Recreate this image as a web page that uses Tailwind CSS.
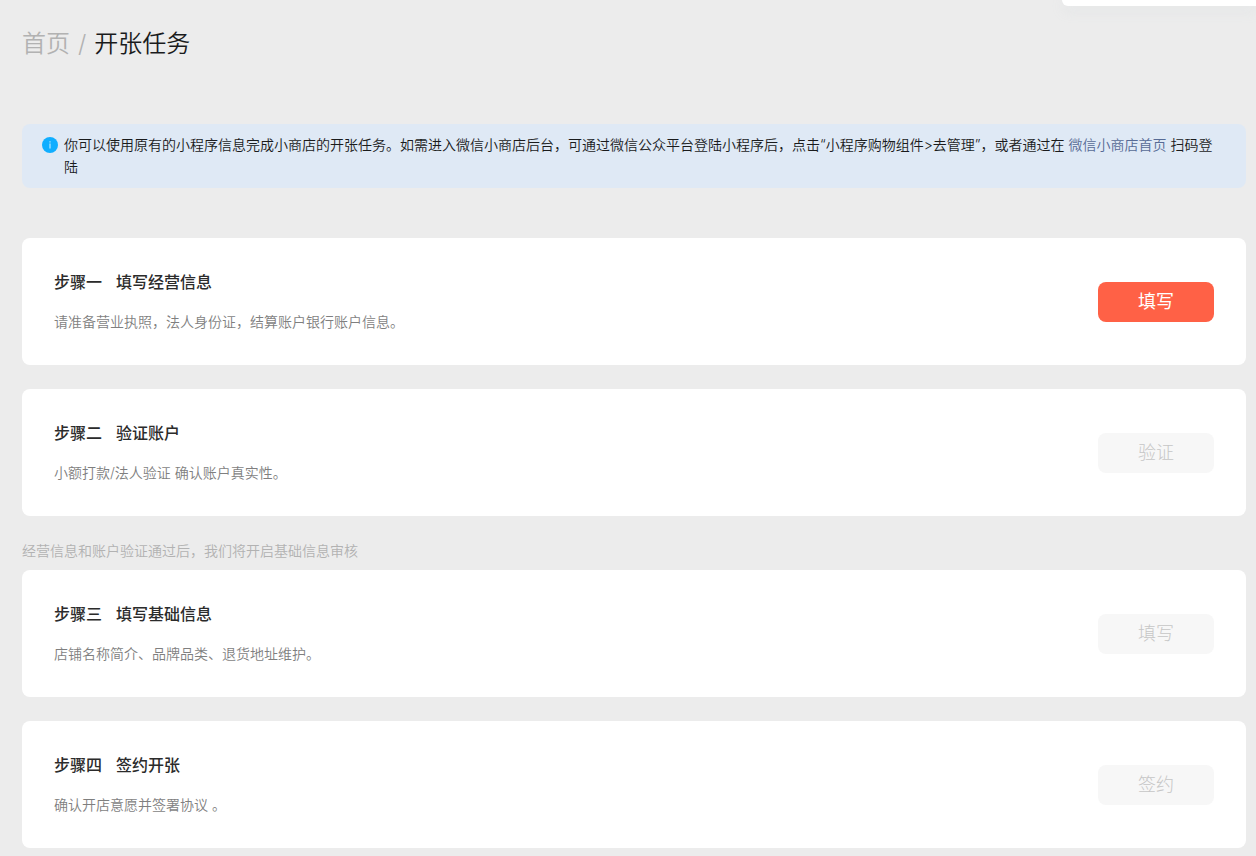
<!DOCTYPE html>
<html lang="zh-CN">
<head>
<meta charset="utf-8">
<meta name="viewport" content="width=device-width, initial-scale=1">
<title>开张任务</title>
<script src="https://cdn.jsdelivr.net/npm/@tailwindcss/browser@4"></script>
</head>
<body class="relative min-h-screen overflow-x-hidden bg-[#ececec] font-['Inter','Noto_Sans_CJK_SC',sans-serif] text-sm font-[350] text-[#1a1b1c]">
<div class="absolute top-0 right-0 h-[6px] w-[194px] rounded-bl-lg bg-white shadow-[0_4px_14px_rgba(180,195,205,0.2)]"></div>
<main class="pt-7 pr-[10px] pb-2 pl-[22px]">
  <nav aria-label="面包屑" class="flex gap-2 text-2xl leading-8">
    <a href="#" class="text-[#b2b2b2]">首页</a>
    <span class="text-[#b2b2b2]">/</span>
    <h1 class="font-[350]">开张任务</h1>
  </nav>

  <section class="mt-16 flex gap-[6px] rounded-lg bg-[#dfe9f5] py-[10px] pr-7 pl-5 leading-[22px]">
    <svg class="mt-[3px] size-4 shrink-0" viewBox="0 0 16 16" aria-hidden="true">
      <circle cx="8" cy="8" r="8" fill="#10aeff"/>
      <path d="M7.5 4.2h1v1.2h-1zM7.5 6.5h1v5.1h-1z" fill="#d8f1ff"/>
    </svg>
    <p>你可以使用原有的小程序信息完成小商店的开张任务。如需进入微信小商店后台，可通过微信公众平台登陆小程序后，点击“小程序购物组件&gt;去管理”，或者通过在 <a href="#" class="text-[#576b95]">微信小商店首页</a> 扫码登陆</p>
  </section>

  <section class="mt-[50px] flex items-center justify-between rounded-lg bg-white p-8">
    <div>
      <h2 class="flex gap-[14px] text-base leading-6 font-medium text-[#2b2b2b]"><span>步骤一</span><span>填写经营信息</span></h2>
      <p class="mt-4 leading-[23px] text-[#7f7f7f]">请准备营业执照，法人身份证，结算账户银行账户信息。</p>
    </div>
    <button type="button" class="h-10 w-[116px] rounded-lg bg-[#ff6146] text-lg leading-6 font-normal text-white">填写</button>
  </section>

  <section class="mt-6 flex items-center justify-between rounded-lg bg-white p-8">
    <div>
      <h2 class="flex gap-[14px] text-base leading-6 font-medium text-[#2b2b2b]"><span>步骤二</span><span>验证账户</span></h2>
      <p class="mt-4 leading-[23px] text-[#7f7f7f]">小额打款/法人验证 确认账户真实性。</p>
    </div>
    <button type="button" disabled class="h-10 w-[116px] rounded-lg bg-[#f7f7f7] text-lg leading-6 font-light text-[#c6c6c6]">验证</button>
  </section>

  <p class="mt-6 leading-[22px] text-[#b2b2b2]">经营信息和账户验证通过后，我们将开启基础信息审核</p>

  <section class="mt-2 flex items-center justify-between rounded-lg bg-white p-8">
    <div>
      <h2 class="flex gap-[14px] text-base leading-6 font-medium text-[#2b2b2b]"><span>步骤三</span><span>填写基础信息</span></h2>
      <p class="mt-4 leading-[23px] text-[#7f7f7f]">店铺名称简介、品牌品类、退货地址维护。</p>
    </div>
    <button type="button" disabled class="h-10 w-[116px] rounded-lg bg-[#f7f7f7] text-lg leading-6 font-light text-[#c6c6c6]">填写</button>
  </section>

  <section class="mt-6 flex items-center justify-between rounded-lg bg-white p-8">
    <div>
      <h2 class="flex gap-[14px] text-base leading-6 font-medium text-[#2b2b2b]"><span>步骤四</span><span>签约开张</span></h2>
      <p class="mt-4 leading-[23px] text-[#7f7f7f]">确认开店意愿并签署协议 。</p>
    </div>
    <button type="button" disabled class="h-10 w-[116px] rounded-lg bg-[#f7f7f7] text-lg leading-6 font-light text-[#c6c6c6]">签约</button>
  </section>
</main>
</body>
</html>
